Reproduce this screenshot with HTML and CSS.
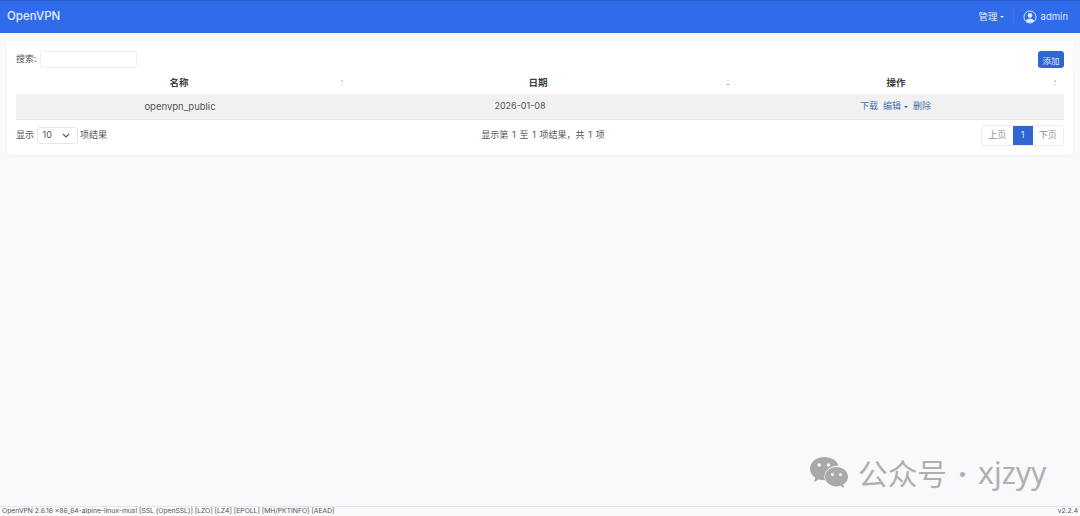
FILE: index.html
```html
<!DOCTYPE html>
<html lang="zh-CN">
<head>
<meta charset="utf-8">
<title>OpenVPN</title>
<link rel="stylesheet" href="styles.css">
</head>
<body>
<header class="navbar">
  <div class="brand">OpenVPN</div>
  <div class="nav-right">
    <span class="nav-item">管理<i class="caret caret-light"></i></span>
    <span class="nav-sep"></span>
    <span class="user">
      <svg class="avatar" viewBox="0 0 16 16" aria-hidden="true">
        <circle cx="8" cy="8" r="6.9" fill="none" stroke="#dfe9fc" stroke-width="1.1"/>
        <circle cx="8" cy="6.2" r="2.7" fill="#dfe9fc"/>
        <path d="M3.2 12.6c.8-2 2.6-3 4.8-3s4 1 4.8 3A6.4 6.4 0 0 1 8 14.5a6.4 6.4 0 0 1-4.8-1.9z" fill="#dfe9fc"/>
      </svg>
      <span>admin</span>
    </span>
  </div>
</header>
<main class="main">
  <section class="card">
    <div class="toolbar">
      <label class="search">搜索:<input class="search-input" type="text"></label>
      <button class="btn-add" type="button">添加</button>
    </div>
    <table class="table">
      <colgroup><col class="col-name"><col class="col-date"><col class="col-op"></colgroup>
      <thead>
        <tr>
          <th class="th-name">名称<span class="sort"><i></i><i></i></span></th>
          <th class="th-date">日期<span class="sort sort-active"><i></i><i></i></span></th>
          <th class="th-op">操作<span class="sort sort-last"><i></i><i></i></span></th>
        </tr>
      </thead>
      <tbody>
        <tr>
          <td class="td-name">openvpn_public</td>
          <td class="td-date">2026-01-08</td>
          <td class="td-op"><a class="link">下载</a><a class="link">编辑<i class="caret caret-dark"></i></a><a class="link">删除</a></td>
        </tr>
      </tbody>
    </table>
    <div class="table-foot">
      <div class="length">显示<span class="select"><span>10</span><svg class="chev" viewBox="0 0 8 5" aria-hidden="true"><path d="M1 1l3 3 3-3" fill="none" stroke="#555" stroke-width="1.1"/></svg></span>项结果</div>
      <div class="info">显示第 1 至 1 项结果，共 1 项</div>
      <div class="pager">
        <span class="page">上页</span>
        <span class="page page-current">1</span>
        <span class="page">下页</span>
      </div>
    </div>
  </section>
</main>
<div class="watermark">
  <svg class="wechat" viewBox="0 0 40 33" aria-hidden="true">
    <path d="M15 1C7.3 1 1 6.2 1 12.7c0 3.7 2 6.9 5.3 9.1L5 26l4.8-2.5c1.6.5 3.4.8 5.2.8h1.100a10.300 10.300 0 0 1-.6-3.300c0-6.300 5.900-11.200 13-11.200h1.100C28.400 4.800 22.300 1 15 1z" fill="#a9a9a9"/>
    <path d="M39 20.700c0-5.400-5.300-9.700-11.500-9.700S16 15.300 16 20.700s5.300 9.700 11.500 9.700c1.300 0 2.600-.2 3.700-.6l3.900 2.200-1-3.500c3-1.900 5-4.600 5-7.800z" fill="#a9a9a9"/>
    <circle cx="10.200" cy="9" r="1.800" fill="#f9f9fb"/><circle cx="19.600" cy="9" r="1.800" fill="#f9f9fb"/>
    <circle cx="23.500" cy="18.500" r="1.500" fill="#f9f9fb"/><circle cx="31.500" cy="18.500" r="1.500" fill="#f9f9fb"/>
  </svg>
  <span class="wm-cn">公众号</span><span class="wm-dot">·</span><span class="wm-en">xjzyy</span>
</div>
<footer class="footer">
  <span>OpenVPN 2.6.16 x86_64-alpine-linux-musl [SSL (OpenSSL)] [LZO] [LZ4] [EPOLL] [MH/PKTINFO] [AEAD]</span>
  <span>v2.2.4</span>
</footer>
</body>
</html>
```
FILE: styles.css
```css
* { box-sizing: border-box; }
html, body { height: 100%; }
body {
  margin: 0;
  height: 516px;
  overflow: hidden;
  display: flex;
  flex-direction: column;
  position: relative;
  background: #f9f9fb;
  color: #555;
  font: 400 9px/1.2 Inter, "Noto Sans CJK SC", sans-serif;
}
.navbar {
  flex: none;
  height: 33px;
  padding: 0 12px 0 7px;
  display: flex;
  align-items: center;
  justify-content: space-between;
  background: #2f6bea;
  border-top: 1px solid #2a5cc9;
  color: #dfe9fc;
}
.brand { font-size: 11.5px; font-weight: 500; color: #e3edfd; }
.nav-right { display: flex; align-items: center; font-size: 9.5px; }
.nav-item { display: flex; align-items: center; }
.nav-sep { width: 1px; height: 18px; margin: 0 9px; background: #3a74e8; }
.user { display: flex; align-items: center; gap: 4px; font-size: 9.5px; }
.avatar { width: 14px; height: 14px; }
.caret { display: inline-block; width: 0; height: 0; margin-left: 2px; border: 2px solid transparent; border-bottom-width: 0; vertical-align: middle; }
.caret-light { border-top-color: #dfe9fc; }
.caret-dark { border-top-color: #44649c; margin-left: 3px; }
.main { flex: 1; padding: 8px 7px; min-height: 0; }
.card {
  height: 114px;
  padding: 10px 9px;
  background: #fff;
  border-radius: 4px;
  box-shadow: 0 1px 2px rgba(30, 50, 90, .05);
}
.toolbar { display: flex; align-items: center; justify-content: space-between; height: 17px; }
.search { display: flex; align-items: center; gap: 3px; font-size: 9px; }
.search-input { width: 97px; height: 17px; padding: 0; border: 1px solid #eceef1; border-radius: 3px; background: #fff; }
.btn-add {
  width: 26px; height: 17px; padding: 0;
  border: 0; border-radius: 3px;
  background: #2f66d4; color: #dfe8fb;
  font: 400 8.5px "Noto Sans CJK SC", sans-serif;
}
.table { width: 100%; margin-top: 6px; border-collapse: collapse; table-layout: fixed; }
.col-name { width: 332px; }
.col-date { width: 386px; }
.col-op { width: auto; }
.table th { position: relative; height: 20px; padding: 0 0 3px; font-size: 9.5px; font-weight: 700; color: #3b3b3b; text-align: center; }
.table th.th-name { padding-right: 6px; }
.table th.th-date { padding-right: 6px; }
.table th.th-op { padding-right: 6px; }
.sort { position: absolute; right: 5px; top: 6px; display: flex; flex-direction: column; gap: 2px; }
.sort-last { right: 8px; }
.sort i { display: block; width: 2px; height: 1.5px; background: #d4d4d4; }
.sort-active i:first-child { background: #eeeeee; }
.sort-active i:last-child { background: #8a8a8a; }
.table td { height: 25px; padding: 0; background: #f1f1f1; border-bottom: 1px solid #e6e6e6; text-align: center; font-size: 9.5px; color: #555; }
.table td.td-name { padding-right: 4px; }
.table td.td-date { padding-right: 42px; font-size: 9px; }
.table td.td-op { padding-right: 7px; }
.link { margin: 0 2.5px; color: #4a72ad; font-size: 9px; }
.table-foot { display: grid; grid-template-columns: 1fr 1fr 1fr; align-items: center; height: 31px; }
.length { display: flex; align-items: center; gap: 2.5px; font-size: 9px; }
.select { display: flex; align-items: center; justify-content: space-between; width: 41px; height: 17px; padding: 0 7px 0 5px; border: 1px solid #e8e8e8; border-radius: 3px; }
.chev { width: 8px; height: 5px; }
.info { text-align: center; font-size: 9px; word-spacing: 1.2px; padding: 1px 0 0 6px; }
.pager { justify-self: end; display: flex; height: 21px; border: 1px solid #eeeeee; border-radius: 3px; }
.page { width: 30.5px; display: flex; align-items: center; justify-content: center; color: #8f8f8f; font-size: 9px; }
.page-current { width: 20px; background: #2f66d4; color: #dfe8fb; }
.watermark { position: absolute; left: 809px; top: 455px; height: 35px; display: flex; align-items: center; color: #a6a6a6; }
.wechat { width: 40px; height: 33px; margin-right: 9px; }
.wm-cn { font: 400 29.7px/35px "Noto Sans CJK SC", sans-serif; color: #b0b0b0; }
.wm-dot { width: 31px; text-align: center; font: 400 24px/35px "Noto Sans CJK SC", sans-serif; color: #b0b0b0; }
.wm-en { font: 400 30px/35px "Noto Sans", sans-serif; color: #b0b0b0; }
.footer {
  flex: none; height: 10px; padding: 0 2px;
  display: flex; align-items: center; justify-content: space-between;
  border-top: 1px solid #e4e5e8;
  font-size: 6.75px; color: #555;
}
```
